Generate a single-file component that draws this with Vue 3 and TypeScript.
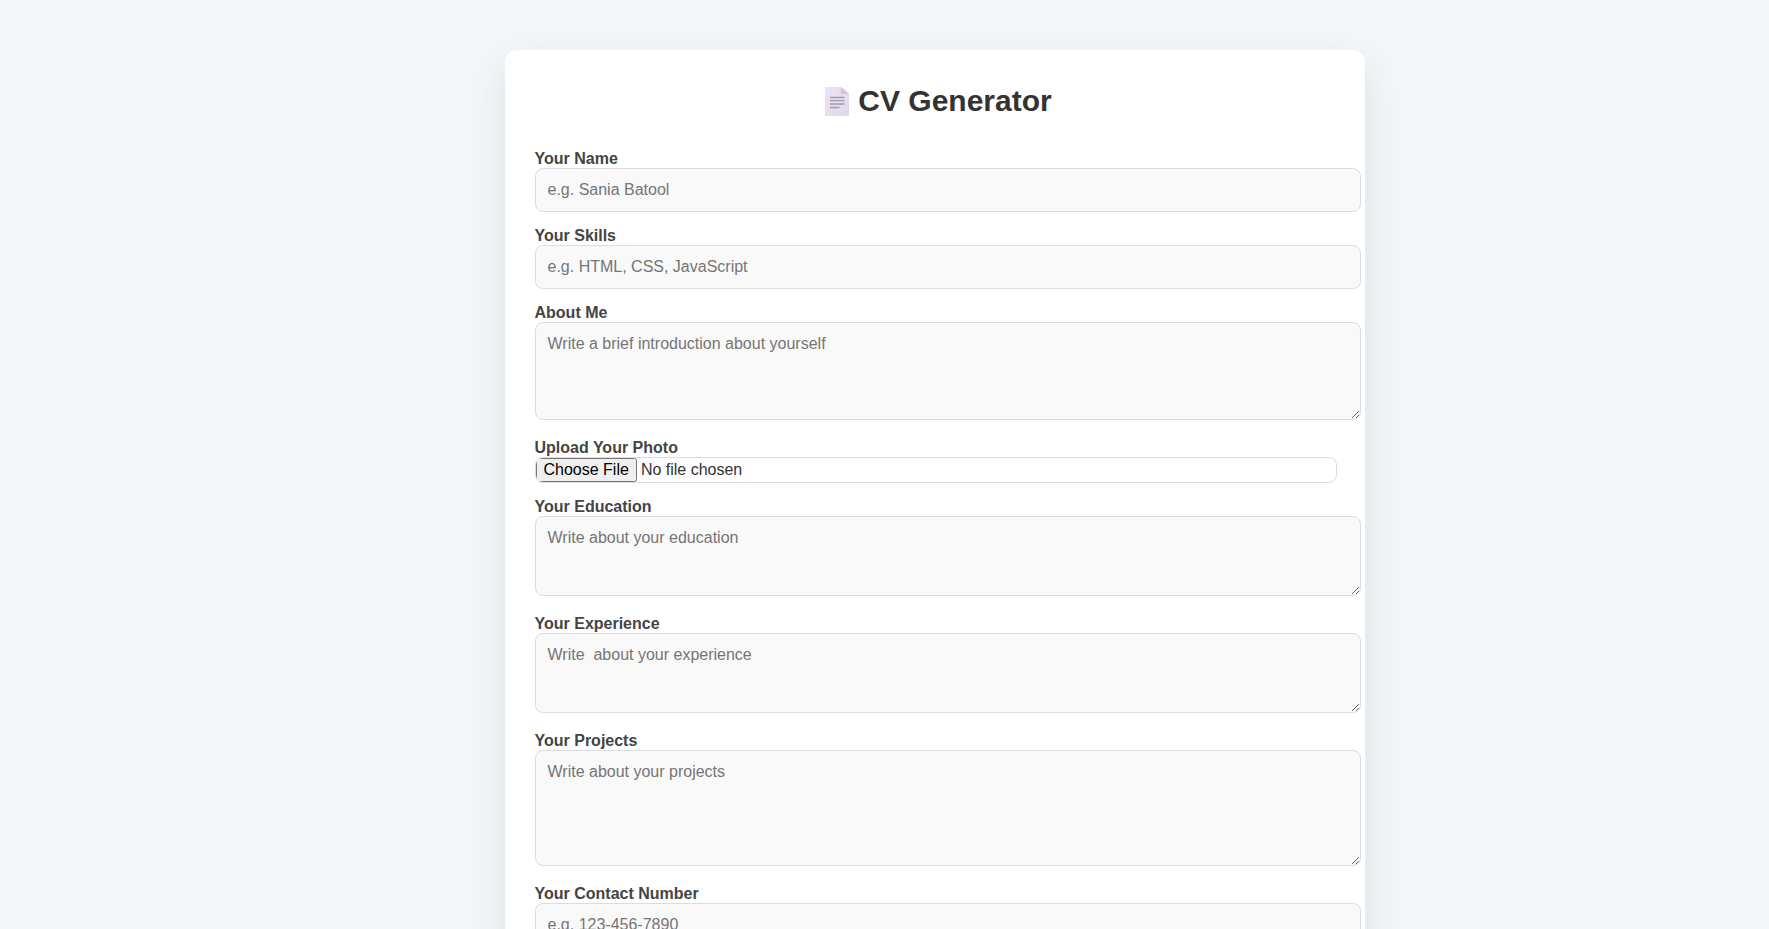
<script setup lang="ts">
import { reactive } from 'vue'

interface Field {
  id: string
  label: string
  kind: 'text' | 'area' | 'file'
  placeholder?: string
  rows?: number
}

const fields: Field[] = [
  { id: 'name', label: 'Your Name', kind: 'text', placeholder: 'e.g. Sania Batool' },
  { id: 'skills', label: 'Your Skills', kind: 'text', placeholder: 'e.g. HTML, CSS, JavaScript' },
  { id: 'about', label: 'About Me', kind: 'area', rows: 4, placeholder: 'Write a brief introduction about yourself' },
  { id: 'photo', label: 'Upload Your Photo', kind: 'file' },
  { id: 'education', label: 'Your Education', kind: 'area', rows: 3, placeholder: 'Write about your education' },
  { id: 'experience', label: 'Your Experience', kind: 'area', rows: 3, placeholder: 'Write  about your experience' },
  { id: 'projects', label: 'Your Projects', kind: 'area', rows: 5, placeholder: 'Write about your projects' },
  { id: 'contact', label: 'Your Contact Number', kind: 'text', placeholder: 'e.g. 123-456-7890' },
]

const values = reactive<Record<string, string>>({})
</script>

<template>
  <div class="page">
    <main class="card">
      <h1 class="title">
        <svg class="page-icon" viewBox="-1 0 33 29" aria-hidden="true">
          <defs>
            <linearGradient id="sheet" x1="0" y1="0" x2="1" y2="1">
              <stop offset="0" stop-color="#ece5f4" />
              <stop offset="1" stop-color="#e0d6ec" />
            </linearGradient>
          </defs>
          <path d="M7 0h16l8 7v22H7z" fill="url(#sheet)" />
          <path d="M23 0l8 7h-8z" fill="#cdc8d2" />
          <path d="M12 10.500h14.500M12 13.700h14.500M12 17h14.500M12 20.500h9.500" stroke="#a49cab" stroke-width="1.300" />
        </svg>
        <span>CV Generator</span>
      </h1>
      <form class="form" @submit.prevent>
        <div v-for="f in fields" :key="f.id" class="field" :class="f.kind">
          <label :for="f.id">{{ f.label }}</label>
          <textarea
            v-if="f.kind === 'area'"
            :id="f.id"
            v-model="values[f.id]"
            class="control"
            :rows="f.rows"
            :placeholder="f.placeholder"
          ></textarea>
          <input v-else-if="f.kind === 'file'" :id="f.id" type="file" class="upload" accept="image/*" />
          <input v-else :id="f.id" v-model="values[f.id]" type="text" class="control" :placeholder="f.placeholder" />
        </div>
      </form>
    </main>
  </div>
</template>

<style>
body {
  margin: 0;
  background: #f3f7fa;
}
</style>

<style scoped>
.page {
  padding: 50px 0 50px 100px;
  font-family: Arial, "Liberation Sans", sans-serif;
  font-size: 16px;
  color: #333;
}
.card {
  max-width: 800px;
  margin: 0 auto;
  padding: 30px;
  background: #fff;
  border-radius: 12px;
  box-shadow: 0 15px 40px rgba(0, 0, 0, 0.1);
}
.title {
  display: flex;
  justify-content: center;
  align-items: center;
  gap: 8px;
  margin: 0 0 28px;
  font-size: 30px;
  line-height: 42px;
}
.page-icon {
  width: 33px;
  height: 29px;
}
.form {
  display: flex;
  flex-direction: column;
  gap: 15px;
}
.field.area {
  padding-bottom: 4px;
}
label {
  display: block;
  line-height: 18px;
  font-weight: bold;
  color: #444;
}
.control,
.upload {
  display: block;
  box-sizing: content-box;
  width: 100%;
  margin: 0;
  border: 1px solid #ddd;
  border-radius: 8px;
  font: inherit;
}
.control {
  padding: 12px;
  line-height: 18px;
  background: #f9f9f9;
  color: #333;
}
input.control {
  height: 18px;
}
textarea.control {
  resize: vertical;
}
.upload {
  height: 24px;
  color: #333;
}
</style>
